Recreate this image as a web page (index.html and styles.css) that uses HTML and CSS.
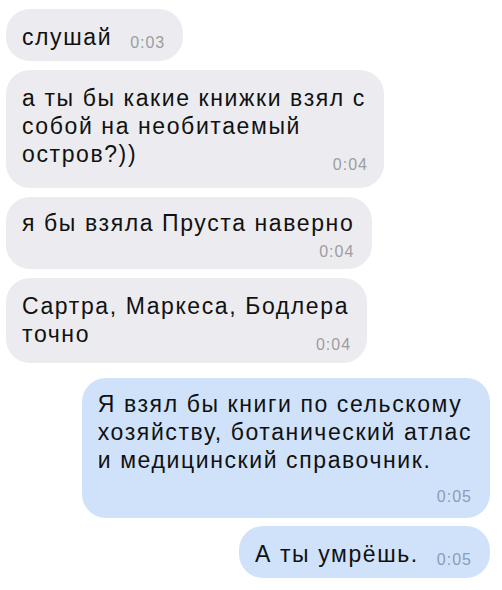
FILE: index.html
```html
<!DOCTYPE html>
<html lang="ru">
<head>
<meta charset="utf-8">
<link rel="stylesheet" href="styles.css">
</head>
<body>
<div class="chat">
  <div class="msg in single first">слушай<span class="time">0:03</span></div>
  <div class="msg in roomy">а ты бы какие книжки взял с<br>собой на необитаемый<br>остров?))<span class="time float">0:04</span></div>
  <div class="msg in own">я бы взяла Пруста наверно<div class="time block">0:04</div></div>
  <div class="msg in">Сартра, Маркеса, Бодлера<br>точно<span class="time float">0:04</span></div>
  <div class="msg out own tall group">Я взял бы книги по сельскому<br>хозяйству, ботанический атлас<br>и медицинский справочник.<div class="time block">0:05</div></div>
  <div class="msg out single last">А ты умрёшь.<span class="time">0:05</span></div>
</div>
</body>
</html>
```

FILE: styles.css
```css
html, body {
  margin: 0;
  padding: 0;
  background: #ffffff;
}

body {
  width: 502px;
  height: 590px;
  overflow: hidden;
  font-family: "Liberation Sans", Arial, sans-serif;
  color: #111111;
}

.chat {
  display: flex;
  flex-direction: column;
  align-items: flex-start;
  padding: 9px 12px 0 6px;
}

.msg {
  box-sizing: border-box;
  font-size: 23px;
  line-height: 28px;
  letter-spacing: 1.6px;
  padding: 14px 18px 9px 16px;
  border-radius: 24px;
  margin-top: 9px;
  white-space: nowrap;
}

.msg.first {
  margin-top: 0;
}

.msg.group {
  margin-top: 15px;
}

.msg.last {
  margin-top: 8px;
}

.msg.roomy {
  padding-bottom: 14px;
}

.in {
  background: #ececf0;
}

.out {
  background: #cfe2fa;
  align-self: flex-end;
}

.time {
  font-size: 16px;
  line-height: 18px;
  letter-spacing: 1px;
  color: #9c9ca1;
}

.out .time {
  color: #8b9db3;
}

.single {
  padding-bottom: 9px;
}

.single .time {
  display: inline-block;
  vertical-align: -3px;
  margin-left: 18px;
}

.time.float {
  float: right;
  margin-top: 16px;
  margin-left: 20px;
  margin-right: -2px;
}

.own {
  padding-top: 12px;
  padding-bottom: 8px;
}

.time.block {
  text-align: right;
  margin-top: 6px;
}

.tall {
  padding-bottom: 12px;
}

.tall .time.block {
  margin-top: 14px;
}
```
